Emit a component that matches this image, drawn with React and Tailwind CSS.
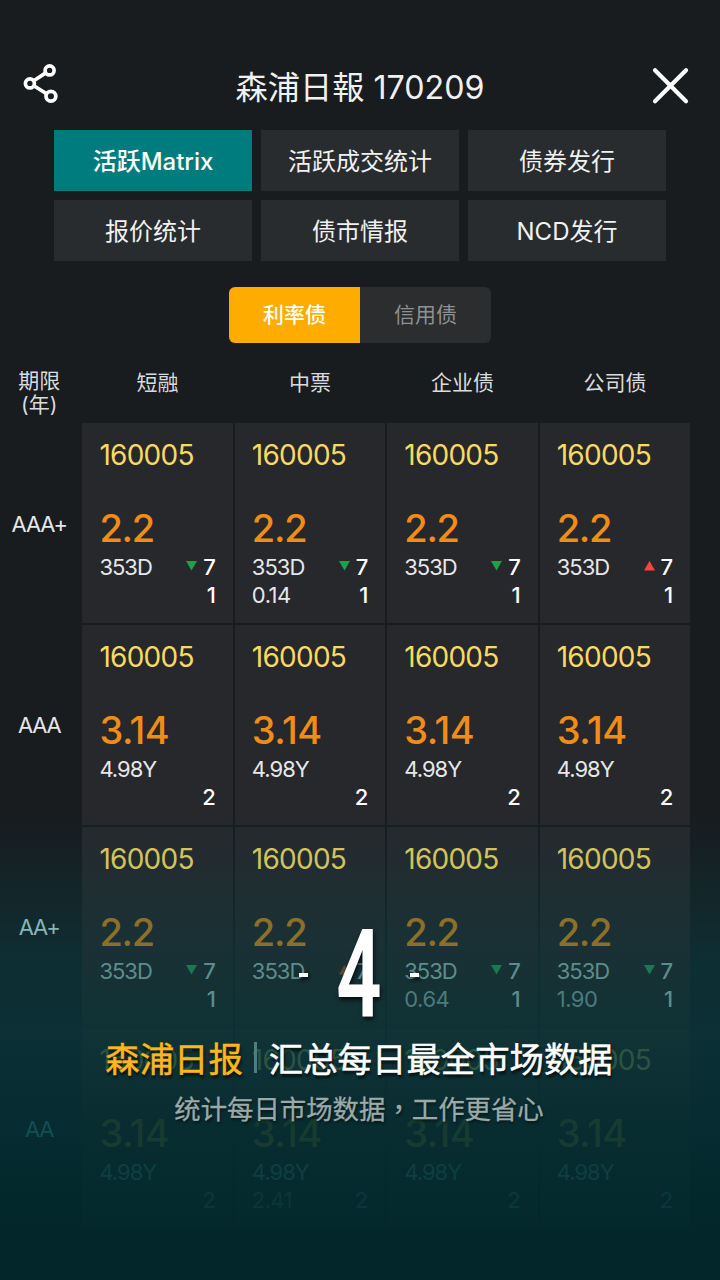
import React from "react";

const tabs = [
  "活跃Matrix",
  "活跃成交统计",
  "债券发行",
  "报价统计",
  "债市情报",
  "NCD发行",
];

const columns = ["短融", "中票", "企业债", "公司债"];

// each row gets dimmer towards the bottom of the screen
const rows = [
  {
    label: "AAA+",
    value: "2.2",
    term: "353D",
    count: "1",
    change: "7",
    directions: ["down", "down", "down", "up"],
    extra: ["", "0.14", "", ""],
    cell: "bg-[#27282c]",
    tone: {
      label: "text-[#e4e6e7]",
      code: "text-[#f8d962]",
      value: "text-[#f08c18] tracking-[-1.3px]",
      text: "text-[#e6e7e8]",
      sub: "text-[#e6e7e8]",
      count: "text-white",
      down: "text-[#21a04c]",
      up: "text-[#fb4440]",
    },
  },
  {
    label: "AAA",
    value: "3.14",
    term: "4.98Y",
    count: "2",
    extra: ["", "", "", ""],
    cell: "bg-[#27282c]",
    tone: {
      label: "text-[#e4e6e7]",
      code: "text-[#f8d962]",
      value: "text-[#f08c18] tracking-[-0.5px]",
      text: "text-[#e6e7e8]",
      sub: "text-[#e6e7e8]",
      count: "text-white",
    },
  },
  {
    label: "AA+",
    value: "2.2",
    term: "353D",
    count: "1",
    change: "7",
    directions: ["down", "up", "down", "down"],
    extra: ["", "", "0.64", "1.90"],
    cell: "bg-linear-to-b from-[#252a2e] via-[#1b3034] to-[#103235]",
    tone: {
      label: "text-[#86b5b5]",
      code: "text-[#d3c35e]",
      value: "text-[#8c6f29] tracking-[-1.3px]",
      text: "text-[#5f8c8d]",
      sub: "text-[#4b7b7d]",
      count: "text-[#5c8c8e]",
      down: "text-[#1b7850]",
      up: "text-[#5d4a32]",
    },
  },
  {
    label: "AA",
    value: "3.14",
    term: "4.98Y",
    count: "2",
    extra: ["", "2.41", "", ""],
    cell: "bg-linear-to-b from-[#103336] via-[#082d31] to-[#04292c]",
    tone: {
      label: "text-[#105052]",
      code: "text-[#2b5540]",
      value: "text-[#173b30] tracking-[-0.5px]",
      text: "text-[#0e3e41]",
      sub: "text-[#09363a]",
      count: "text-[#09363a]",
    },
  },
];

const ShareIcon = () => (
  <svg
    width="38"
    height="42"
    viewBox="0 0 38 42"
    fill="none"
    stroke="#fff"
    strokeWidth="3.7"
  >
    <circle cx="27.6" cy="7.4" r="4.5" />
    <circle cx="7.9" cy="20.4" r="4.5" />
    <circle cx="28.9" cy="33.3" r="4.9" />
    <path d="M11.8 17.8 23.7 9.9M11.8 22.8 24.6 30.8" />
  </svg>
);

const CloseIcon = () => (
  <svg
    width="38"
    height="38"
    viewBox="0 0 38 38"
    stroke="#fff"
    strokeWidth="4.2"
    strokeLinecap="round"
  >
    <path d="M3 3.3 34 34.3M34 3.3 3 34.3" />
  </svg>
);

const Arrow = ({ up, color }) => (
  <svg width="11" height="10" viewBox="0 0 11 10" className={`mb-0.5 ${color}`}>
    <path d={up ? "M0 9.5 5.5 0 11 9.5Z" : "M0 0H11L5.5 9.5Z"} fill="currentColor" />
  </svg>
);

const Cell = ({ row, index }) => {
  const { tone } = row;
  const up = row.directions && row.directions[index] === "up";

  return (
    <div className={`h-[200px] pl-[17px] pr-[17px] pt-[14px] ${row.cell}`}>
      <div className={`h-9 text-[28px] leading-9 tracking-[-0.75px] ${tone.code}`}>
        160005
      </div>
      <div
        className={`mt-[35px] h-10 text-[38px] leading-10 font-medium ${tone.value}`}
      >
        {row.value}
      </div>
      <div className="mt-[5px] flex h-7 items-center justify-between text-[22px] leading-7">
        <span className={`tracking-[-1px] ${tone.text}`}>{row.term}</span>
        {row.change && (
          <span className={`flex items-center gap-1.5 font-medium ${tone.count}`}>
            <Arrow up={up} color={up ? tone.up : tone.down} />
            {row.change}
          </span>
        )}
      </div>
      <div className="flex h-7 items-center justify-between text-[22px] leading-7">
        <span className={`tracking-[-0.5px] ${tone.sub}`}>{row.extra[index]}</span>
        <span className={`font-medium ${tone.count}`}>{row.count}</span>
      </div>
    </div>
  );
};

const Matrix = () => (
  <div className="mt-[26px]">
    <div className="flex h-[54px] text-[21px] text-[#d9dbdc]">
      <div className="w-[82.4px] shrink-0 pr-1 text-center leading-6">
        期限
        <br />
        (年)
      </div>
      <div className="grid w-[607.8px] grid-cols-4 gap-0.5">
        {columns.map((name) => (
          <div key={name} className="pt-0.5 text-center leading-6">
            {name}
          </div>
        ))}
      </div>
    </div>

    <div className="flex flex-col gap-[1.8px]">
      {rows.map((row) => (
        <div key={row.label} className="flex">
          <div
            className={`flex w-[82.4px] shrink-0 items-center justify-center pt-0.5 pr-1 text-[22px] tracking-[-1.2px] ${row.tone.label}`}
          >
            {row.label}
          </div>
          <div className="grid w-[607.8px] grid-cols-4 gap-0.5">
            {columns.map((name, i) => (
              <Cell key={name} row={row} index={i} />
            ))}
          </div>
        </div>
      ))}
    </div>
  </div>
);

const Caption = () => (
  <div className="absolute inset-x-0 top-[927px] flex flex-col items-center pr-[2px] font-['Noto_Sans_CJK_TC','Noto_Sans_CJK_SC',sans-serif] text-white">
    <div className="flex h-24 items-center gap-8 [filter:drop-shadow(1px_3px_2px_rgba(0,0,0,0.7))]">
      <span className="h-1 w-[9px] bg-white" />
      <span className="flex w-[38px] scale-x-[0.65] justify-center font-[Roboto,sans-serif] text-[122px] leading-24 font-semibold">
        4
      </span>
      <span className="h-1 w-[9px] bg-white" />
    </div>
    <div className="mt-[9px] flex h-[50px] items-center text-[34.4px] leading-[50px] [-webkit-text-stroke:0.5px_currentColor] [text-shadow:1px_3px_3px_rgba(0,0,0,0.75)]">
      <span className="text-[#fdb71a]">森浦日报</span>
      <span className="mr-3 ml-[11px] h-[31px] w-[3px] bg-[#4b7f81]" />
      <span lang="zh-CN" className="font-['Noto_Sans_CJK_SC',sans-serif]">
        汇总每日最全市场数据
      </span>
    </div>
    <div className="mt-1.5 text-[26.4px] leading-10 text-[#9ba9a8] [-webkit-text-stroke:0.3px_currentColor] [text-shadow:1px_2px_3px_rgba(0,0,0,0.6)]">
      统计每日市场数据，工作更省心
    </div>
  </div>
);

export default function App() {
  return (
    <div className="relative h-[1280px] w-[720px] overflow-hidden bg-[#181c1f] bg-[linear-gradient(to_bottom,#181c1f_0,#181c1f_815px,#0e2e33_960px,#0a3035_1050px,#03282c_1200px,#02262a_1280px)] font-['Inter','Noto_Sans_CJK_SC',sans-serif]">
      <header className="grid h-[130px] grid-cols-[1fr_auto_1fr] items-center pt-[42px] pr-[30px] pl-[22px]">
        <div className="pb-1">
          <ShareIcon />
        </div>
        <h1 className="pt-1 pl-2 text-[32.2px] leading-10 text-[#f0f0f0]">
          森浦日報 170209
        </h1>
        <div className="flex justify-end">
          <CloseIcon />
        </div>
      </header>

      <nav className="mx-[54px] grid grid-cols-3 gap-x-[9px] gap-y-[9px]">
        {tabs.map((tab, i) => (
          <button
            key={tab}
            className={`h-[61px] pt-0.5 text-2xl ${
              i === 0
                ? "bg-[#007c7e] font-medium text-white"
                : "bg-[#292c2e] text-[#f0f1f1]"
            }`}
          >
            {tab}
          </button>
        ))}
      </nav>

      <div className="mt-[26px] flex justify-center text-[21px]">
        <button className="h-14 w-[131px] rounded-l-md bg-[#ffac00] font-medium text-white">
          利率债
        </button>
        <button className="h-14 w-[131px] rounded-r-md bg-[#2c2d2f] text-[#8f9091]">
          信用债
        </button>
      </div>

      <Matrix />
      <Caption />
    </div>
  );
}
